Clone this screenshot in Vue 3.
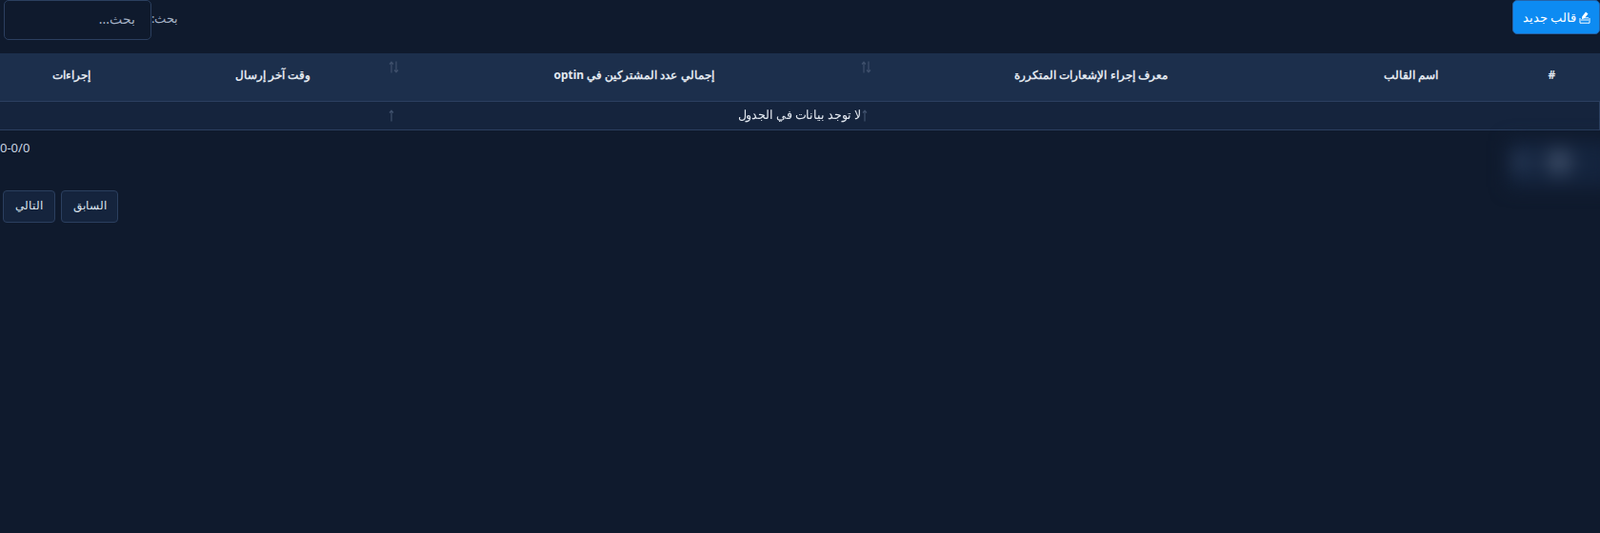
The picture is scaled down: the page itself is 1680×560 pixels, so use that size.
<script setup>
const columns = [
  { label: '#', width: 100 },
  { label: 'اسم القالب', width: 196 },
  { label: 'معرف إجراء الإشعارات المتكررة', width: 476, sort: 'near' },
  { label: 'إجمالي عدد المشتركين في optin', width: 484, sort: 'far' },
  { label: 'وقت آخر إرسال', width: 274 },
  { label: 'إجراءات', width: 150 },
]
</script>

<template>
  <div class="page" dir="rtl">
    <div class="toolbar">
      <button class="primary">
        <svg class="icon" viewBox="0 0 12 13" width="12" height="13" aria-hidden="true">
          <path class="solid" d="M7 .5l2.500 2L5.500 7.500l-2.500.5.2-2.500z" />
          <path class="solid" d="M2 8.500h8v1H2z" />
          <path class="line" d="M1 7v5.200h10V7" />
          <path class="line" d="M6 6.800h4" />
        </svg>
        قالب جديد
      </button>
      <div class="search">
        <label>بحث:</label>
        <input placeholder="بحث..." />
      </div>
    </div>

    <table>
      <colgroup>
        <col v-for="c in columns" :key="c.label" :style="{ width: c.width + 'px' }" />
      </colgroup>
      <thead>
        <tr>
          <th v-for="c in columns" :key="c.label">
            <span class="th-label">{{ c.label }}</span>
            <span v-if="c.sort" class="sort" :class="c.sort">
              <svg viewBox="0 0 12 13" width="12" height="13" aria-hidden="true">
                <path d="M3 12.500V1.500M1 3.500L3 1.200 5 3.500" />
                <path d="M8 .5V11.500M6 9.500L8 11.800 10 9.500" />
              </svg>
            </span>
          </th>
        </tr>
      </thead>
      <tbody>
        <tr>
          <td colspan="6">
            <span class="td-label">لا توجد بيانات في الجدول</span>
            <span class="arrow first">
              <svg viewBox="0 0 6 13" width="6" height="13" aria-hidden="true"><path d="M3 12.500V1.500M1 3.500L3 1.200 5 3.500" /></svg>
            </span>
            <span class="arrow second">
              <svg viewBox="0 0 6 13" width="6" height="13" aria-hidden="true"><path d="M3 12.500V1.500M1 3.500L3 1.200 5 3.500" /></svg>
            </span>
          </td>
        </tr>
      </tbody>
    </table>

    <div class="info" dir="ltr">0-0/0</div>

    <div class="pager">
      <button>السابق</button>
      <button>التالي</button>
    </div>

    <div class="blur" aria-hidden="true">
      <span class="dot big"></span>
      <span class="dot small"></span>
    </div>
  </div>
</template>

<style>
html, body { margin: 0; background: #0f1a2d; }
</style>

<style scoped>
.page {
  position: relative;
  width: 1680px;
  height: 560px;
  overflow: hidden;
  background: #0f1a2d;
  color: #cbd5e1;
  font-family: "Noto Sans", "Liberation Sans", sans-serif;
  font-size: 13px;
}
.toolbar {
  display: flex;
  justify-content: space-between;
  align-items: flex-start;
  height: 56px;
}
.primary {
  width: 92px;
  height: 36px;
  background: #0d8bf2;
  color: #fff;
  border: 1px solid #2563a8;
  border-radius: 5px;
  font: inherit;
  font-size: 12.500px;
  font-weight: 500;
  display: flex;
  align-items: center;
  justify-content: center;
  gap: 3px;
  padding: 0 0 0 1px;
}
.icon { flex: none; }
.search {
  display: flex;
  align-items: flex-start;
  margin-left: 4px;
}
.search label {
  line-height: 38px;
  color: #a3b0c4;
  font-size: 13px;
}
.search input {
  width: 155px;
  height: 42px;
  box-sizing: border-box;
  background: #0f1a2d;
  border: 1px solid #2b3f5f;
  border-radius: 5px;
  padding: 0 16px 3px;
  color: #cbd5e1;
  font: inherit;
  font-size: 14px;
}
.search input::placeholder { color: #a3b0c4; opacity: 1; }
table {
  width: 1680px;
  table-layout: fixed;
  border-collapse: collapse;
}
th {
  position: relative;
  height: 50px;
  padding: 0;
  background: #1c2f4c;
  color: #e2e8f0;
  font-size: 12px;
  font-weight: 700;
  text-align: center;
}
.th-label {
  display: block;
  margin-top: -5px;
}
.sort {
  position: absolute;
  top: 8px;
  z-index: 1;
  line-height: 0;
}
.sort.near { left: -4px; }
.sort.far { left: -16px; }
svg path { fill: none; }
.icon .solid { fill: currentColor; }
.icon .line { stroke: currentColor; stroke-width: 1; }
.sort path, .arrow path {
  stroke: #3f506c;
  stroke-width: 1.200;
}
td {
  position: relative;
  height: 29px;
  padding: 0;
  background: #15243d;
  border: 1px solid #2b3f5f;
  color: #e2e8f0;
  font-size: 13px;
  font-weight: 500;
  text-align: center;
}
.td-label {
  display: block;
  margin-top: -4px;
  transform: scaleX(0.97);
}
.arrow {
  position: absolute;
  top: 8px;
  line-height: 0;
}
.arrow.first { left: 408px; }
.arrow.second { left: 905px; }
.info {
  margin-top: 9px;
  height: 18px;
  line-height: 18px;
  font-size: 13px;
  text-align: left;
  color: #cbd5e1;
}
.pager {
  display: flex;
  justify-content: flex-end;
  gap: 6px;
  margin: 36px 0 0 3px;
}
.pager button {
  height: 34px;
  background: #15243d;
  border: 1px solid #2b3f5f;
  border-radius: 4px;
  color: #dbe4ef;
  font: inherit;
  font-size: 12px;
  padding: 0 12px 3px;
}
.pager button:first-child { padding: 0 11.500px 3px; }
.blur {
  position: absolute;
  left: 1584px;
  top: 148px;
  width: 110px;
  height: 48px;
  background: #14243e;
  filter: blur(10px);
}
.dot {
  position: absolute;
  border-radius: 50%;
  background: #3f4f69;
}
.dot.big { left: 40px; top: 9px; width: 26px; height: 26px; }
.dot.small { left: 4px; top: 13px; width: 18px; height: 18px; background: #2f415e; }
</style>
